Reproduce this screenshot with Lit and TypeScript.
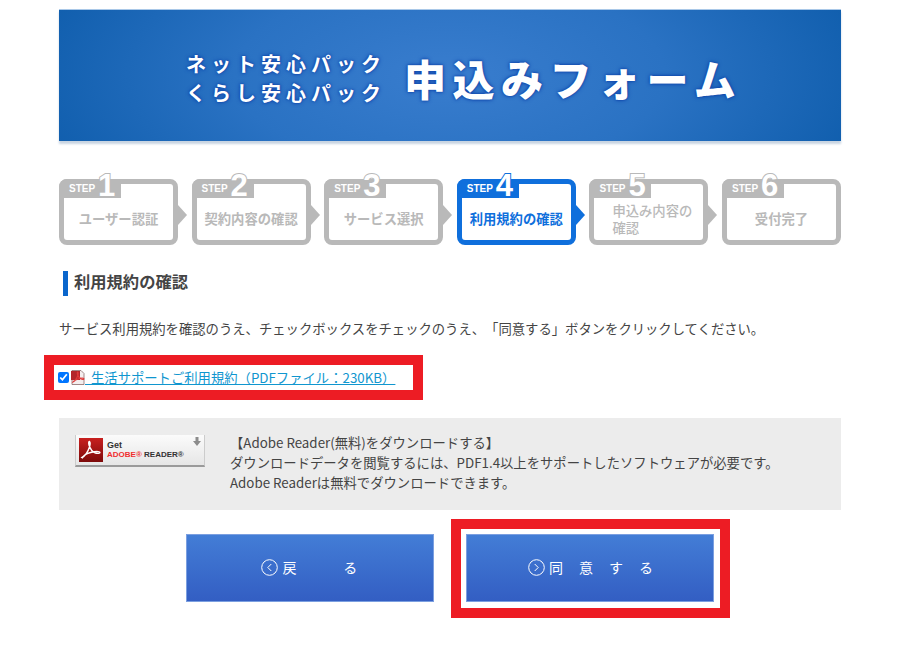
import { LitElement, html, css, svg } from "lit";
import { customElement } from "lit/decorators.js";

const STEPS = [
  { n: 1, label: "ユーザー認証" },
  { n: 2, label: "契約内容の確認" },
  { n: 3, label: "サービス選択" },
  { n: 4, label: "利用規約の確認", active: true },
  { n: 5, label: "申込み内容の確認", wrap: true },
  { n: 6, label: "受付完了", last: true },
];

const acrobat = svg`<path d="M3 19.5c3-1.5 6-6 7.5-10.500.6-2 .6-5 0-5.500-.8-.4-1 1.500-.5 3.500 1 3.500 4 7 6.500 8 2 .7 4.500.5 4.500-.5s-3-1.200-6-.7c-3.500.6-8 2-10 4-1 1-1.500 2-1 2.200z" fill="none" stroke="#fff" stroke-width="1.400"/>`;

@customElement("app-root")
export class AppRoot extends LitElement {
  static styles = css`
    :host {
      display: block;
      height: 649px;
      overflow: hidden;
      background: #fff;
      font-family: "Noto Sans CJK JP", "Noto Sans", sans-serif;
      font-size: 13.33px;
      color: #444;
      text-spacing-trim: space-all;
    }
    .page {
      width: 782px;
      margin: 0 auto;
      padding-top: 9px;
      display: flex;
      flex-direction: column;
    }
    .banner {
      height: 132px;
      box-sizing: border-box;
      border-top: 1px solid #a9c8e8;
      background: radial-gradient(ellipse 430px 190px at 50% 50%, #397dce 0%, #2a72c3 50%, #105ead 100%);
      box-shadow: 0 3px 2px #c9d5e2;
      display: flex;
      align-items: center;
      padding: 5px 0 0 127px;
      gap: 18px;
      color: #fff;
      text-shadow: 0 0 4px #0b3fa8, 0 0 2px #0b3fa8;
      font-weight: 700;
    }
    .banner-sub {
      font-size: 20px;
      line-height: 29px;
      letter-spacing: 5px;
      white-space: nowrap;
    }
    .banner-main {
      font-size: 42px;
      line-height: 50px;
      letter-spacing: 6.500px;
      white-space: nowrap;
      font-weight: 900;
    }
    .steps {
      display: flex;
      justify-content: space-between;
      margin-top: 38px;
    }
    .step {
      --c: #b9b9b9;
      flex: none;
      width: 119px;
      height: 66px;
      box-sizing: border-box;
      border: 5px solid var(--c);
      border-radius: 8px;
      background: #fff;
      position: relative;
      display: flex;
      align-items: center;
      justify-content: center;
      padding-top: 13px;
      color: var(--c);
      font-weight: 700;
      font-size: 13.33px;
      line-height: 17px;
    }
    .step.active {
      --c: #0f6fdc;
    }
    .step.wrap {
      font-weight: 500;
      justify-content: flex-start;
      padding-left: 18px;
    }
    .step.wrap .label {
      max-width: 82px;
    }
    .step:not(.last)::after {
      content: "";
      position: absolute;
      right: -14px;
      top: 21px;
      border-left: 9px solid var(--c);
      border-top: 10px solid transparent;
      border-bottom: 10px solid transparent;
    }
    .tab {
      position: absolute;
      left: -5px;
      top: -5px;
      width: 62px;
      height: 19px;
      box-sizing: border-box;
      background: var(--c);
      border-radius: 8px 0 0 0;
      color: #fff;
      font-family: "Liberation Sans", sans-serif;
      font-weight: 700;
      font-size: 10px;
      line-height: 19px;
      padding-left: 10px;
    }
    .digit {
      position: absolute;
      left: 39px;
      top: -9px;
      font-size: 31px;
      line-height: 31px;
      color: #fff;
      -webkit-text-stroke: 2px var(--c);
      paint-order: stroke fill;
    }
    h2 {
      margin: 26px 0 0 4px;
      height: 25px;
      box-sizing: border-box;
      border-left: 5px solid #0a66cc;
      padding-left: 6px;
      font-size: 16.300px;
      line-height: 21px;
      font-weight: 700;
      color: #444;
    }
    .intro {
      margin: 23px 0 0;
      line-height: 20px;
      white-space: nowrap;
    }
    .agree {
      margin: 16px 0 0 -15px;
      width: 379px;
      height: 45px;
      box-sizing: border-box;
      border: 10px solid #ed1c24;
      background: #fff;
      display: flex;
      align-items: center;
      padding-left: 4px;
    }
    .agree input {
      width: 11px;
      height: 11px;
      margin: 0 2px 0 0;
      accent-color: #0075ff;
    }
    .agree svg {
      flex: none;
    }
    .agree a {
      color: #1096cf;
      text-decoration: underline;
      white-space: pre;
      line-height: 20px;
    }
    .adobe {
      margin-top: 18px;
      height: 92px;
      background: #ececec;
      display: flex;
      align-items: center;
      padding-left: 16px;
      gap: 25px;
    }
    .badge {
      flex: none;
      width: 130px;
      height: 32px;
      margin-top: -26px;
      box-sizing: border-box;
      background: linear-gradient(#fbfbfb, #e6e6e6);
      border-bottom: 2px solid #9a9a9a;
      border-left: 1px solid #ccc;
      border-right: 1px solid #ccc;
      position: relative;
      display: flex;
      align-items: center;
      padding-left: 3px;
      gap: 4px;
      font-family: "Liberation Sans", sans-serif;
      font-weight: 700;
      font-size: 8px;
      line-height: 10px;
      color: #333;
    }
    .badge .get {
      font-size: 9px;
    }
    .badge .arrow {
      position: absolute;
      right: 3px;
      top: 2px;
    }
    .red {
      color: #f02f2f;
    }
    .adobe-text {
      line-height: 20px;
      white-space: nowrap;
      margin-top: -3px;
    }
    .adobe-text .title {
      display: block;
    }
    .actions {
      display: flex;
      align-items: center;
      gap: 17px;
      margin-top: 9px;
      padding-left: 127px;
    }
    .frame {
      border: 10px solid #ed1c24;
      padding: 5px 6px 6px 5px;
      background: #fff;
    }
    .btn {
      width: 248px;
      height: 68px;
      box-sizing: border-box;
      padding: 0 0 3px 0;
      border: 1px solid #7b9fe0;
      background: linear-gradient(#437dd6, #335ec3);
      color: #fff;
      font-family: inherit;
      font-size: 14px;
      font-weight: 400;
      display: flex;
      align-items: center;
      justify-content: center;
      gap: 4px;
      cursor: pointer;
    }
    .btn svg {
      position: relative;
      top: 1px;
    }
    .btn.back {
      letter-spacing: 6.300px;
      padding-left: 5px;
      margin-bottom: 1px;
    }
    .btn.next {
      letter-spacing: 16px;
      padding-left: 17px;
    }
  `;

  private circle(dir: "left" | "right") {
    const d = dir === "left" ? "M10.300 5l-3.500 3.500 3.500 3.500" : "M6.700 5l3.500 3.500-3.500 3.500";
    return html`<svg width="17" height="17" viewBox="0 0 17 17" fill="none" stroke="#fff" stroke-width="1" aria-hidden="true">
      <circle cx="8.500" cy="8.500" r="7.800" />
      <path d=${d} />
    </svg>`;
  }

  render() {
    return html`
      <div class="page">
        <header class="banner">
          <div class="banner-sub">ネット安心パック<br />くらし安心パック</div>
          <div class="banner-main">申込みフォーム</div>
        </header>

        <div class="steps">
          ${STEPS.map(
            (s) => html`<div class="step ${s.active ? "active" : ""} ${s.wrap ? "wrap" : ""} ${s.last ? "last" : ""}">
              <div class="tab">STEP<span class="digit">${s.n}</span></div>
              <span class="label">${s.label}</span>
            </div>`
          )}
        </div>

        <h2>利用規約の確認</h2>
        <p class="intro">サービス利用規約を確認のうえ、チェックボックスをチェックのうえ、「同意する」ボタンをクリックしてください。</p>

        <div class="agree">
          <input type="checkbox" checked />
          <svg width="14" height="15" viewBox="0 0 14 15" aria-hidden="true">
            <path d="M1 .5h9l3 3v11H1z" fill="#f4eeee" stroke="#8a6a6a" stroke-width=".8" />
            <rect x="0" y="1" width="9" height="9" fill="#b3262a" />
            <path d="M2 12c2-1 4-4 5-7 .4-1.500.2-3-.3-3s-.5 1.500 0 3c.8 2.200 3 4 5 4.500 1 .2 1.500-.5 1-1s-3-.4-5 .2c-2 .6-5 2-5.700 3.300z" fill="none" stroke="#e03a3a" stroke-width="1.100" />
          </svg>
          <a href="#">  生活サポートご利用規約（PDFファイル：230KB）</a>
        </div>

        <section class="adobe">
          <div class="badge">
            <svg width="24" height="24" viewBox="0 0 24 24" aria-hidden="true">
              <defs>
                <linearGradient id="ar" x1="0" y1="0" x2="0" y2="1">
                  <stop offset="0" stop-color="#c8201f" />
                  <stop offset="1" stop-color="#7d0a0a" />
                </linearGradient>
              </defs>
              <rect width="24" height="24" fill="url(#ar)" />
              ${acrobat}
            </svg>
            <div>
              <div class="get">Get</div>
              <div><span class="red">ADOBE®</span> READER®</div>
            </div>
            <svg class="arrow" width="8" height="9" viewBox="0 0 8 9" aria-hidden="true">
              <path d="M2.500 0h3v4H8L4 9 0 4h2.500z" fill="#8c8c8c" />
            </svg>
          </div>
          <div class="adobe-text">
            <span class="title">【Adobe Reader(無料)をダウンロードする】</span>
            ダウンロードデータを閲覧するには、PDF1.4以上をサポートしたソフトウェアが必要です。<br />
            Adobe Readerは無料でダウンロードできます。
          </div>
        </section>

        <div class="actions">
          <button class="btn back">${this.circle("left")}<span>戻　　る</span></button>
          <div class="frame">
            <button class="btn next">${this.circle("right")}<span>同意する</span></button>
          </div>
        </div>
      </div>
    `;
  }
}
